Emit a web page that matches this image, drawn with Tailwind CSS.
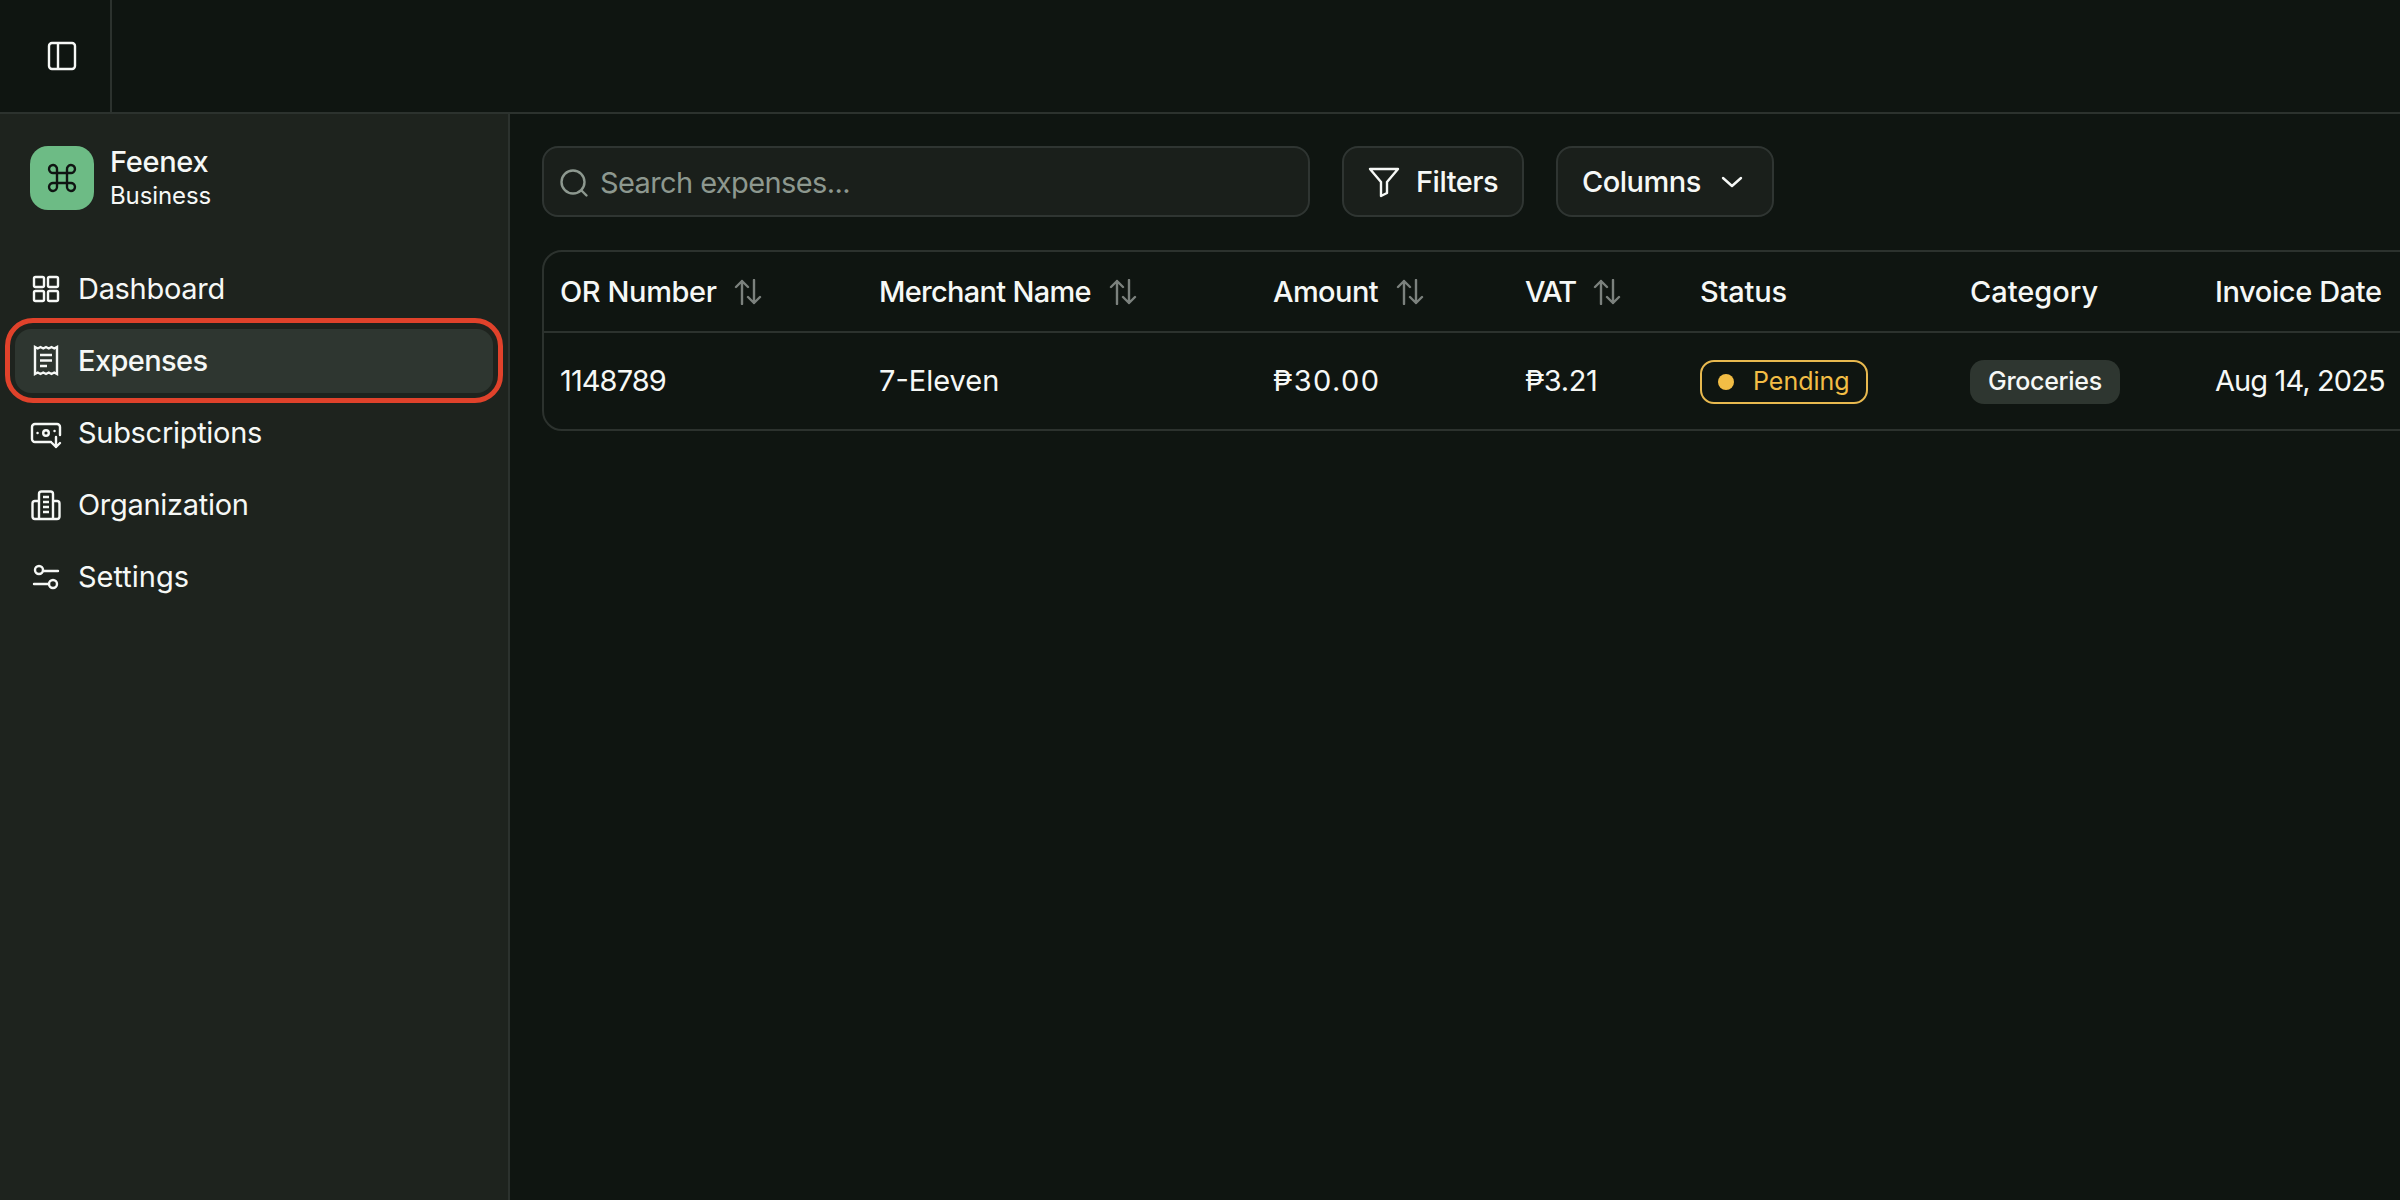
<!DOCTYPE html>
<html lang="en">

<head>
    <meta charset="UTF-8">
    <title>Feenex Expenses</title>
    <script src="https://cdn.jsdelivr.net/npm/@tailwindcss/browser@4"></script>
</head>

<body class="bg-[#0f1511] text-[#f6f8f6] font-['Inter',sans-serif]">
    <div class="w-[2400px] h-[1200px] overflow-hidden flex flex-col">

        <!-- top bar -->
        <header class="h-[114px] shrink-0 flex border-b-2 border-[#2c322e]">
            <div class="w-[112px] flex items-center pl-[46px] border-r-2 border-[#2c322e]">
                <svg class="w-8 h-8" viewBox="0 0 32 32" fill="none" stroke="currentColor" stroke-width="2.4">
                    <rect x="3" y="3" width="26" height="26" rx="3" />
                    <path d="M12 3v26" />
                </svg>
            </div>
        </header>

        <div class="flex flex-1 min-h-0">
            <!-- sidebar -->
            <aside class="w-[510px] shrink-0 bg-[#1e231e] border-r-2 border-[#2c322e] px-[15px] pt-[30px]">
                <div class="flex items-center gap-4 pl-[15px]">
                    <div class="w-16 h-16 rounded-[18px] bg-[#6dbb85] flex items-center justify-center text-[#0f1412]">
                        <svg class="w-8 h-8" viewBox="0 0 32 32" fill="none" stroke="currentColor" stroke-width="2.4">
                            <path d="M21 11H11v10h10V11zM11 11H7.500a4 4 0 1 1 3.500-3.500V11zM21 11V7.500a4 4 0 1 1 3.500 3.500H21zM11 21v3.500A4 4 0 1 1 7.500 21H11zM21 21h3.500a4 4 0 1 1-3.500 3.500V21z" />
                        </svg>
                    </div>
                    <div>
                        <div class="text-[29px] leading-[36px] font-medium tracking-[-0.3px]">Feenex</div>
                        <div class="text-[24px] leading-[30px] tracking-[-0.1px] pt-[1px]">Business</div>
                    </div>
                </div>

                <nav class="mt-[46px] flex flex-col gap-2 text-[29px] tracking-[-0.3px]">
                    <a class="h-16 flex items-center gap-4 pl-[15px]">
                        <svg class="w-8 h-8" viewBox="0 0 32 32" fill="none" stroke="currentColor" stroke-width="2.400">
                            <rect x="4" y="4" width="10" height="10" rx="1.500" />
                            <rect x="18" y="4" width="10" height="10" rx="1.500" />
                            <rect x="4" y="18" width="10" height="10" rx="1.500" />
                            <rect x="18" y="18" width="10" height="10" rx="1.500" />
                        </svg>
                        Dashboard
                    </a>
                    <a class="relative h-16 flex items-center gap-4 pl-[15px] rounded-[16px] bg-[#2e3630] font-medium tracking-[-0.6px]">
                        <svg class="w-8 h-8" viewBox="0 0 32 32" fill="none" stroke="currentColor" stroke-width="2.400">
                            <path d="M5 2v27l2.750-1.500 2.750 1.500 2.750-1.500 2.750 1.500 2.750-1.500 2.750 1.500 2.750-1.500L27 29V2l-2.750 1.500L21.500 2l-2.750 1.500L16 2l-2.750 1.500L10.500 2 7.750 3.500z" />
                            <path d="M10 10h12M10 15.500h12M10 21h7" />
                        </svg>
                        Expenses
                        <!-- red annotation round the active item -->
                        <span class="absolute -inset-x-[10px] -top-[11px] -bottom-[10px] border-[5px] border-[#e0422b] rounded-[28px]"></span>
                    </a>
                    <a class="h-16 flex items-center gap-4 pl-[15px]">
                        <svg class="w-8 h-8" viewBox="0 0 32 32" fill="none" stroke="currentColor" stroke-width="2.400" stroke-linecap="round" stroke-linejoin="round">
                            <path d="M21 25H5a3 3 0 0 1-3-3V10a3 3 0 0 1 3-3h22a3 3 0 0 1 3 3v8" />
                            <circle cx="16" cy="16" r="2.800" />
                            <path d="M7.500 16h.100M24.500 14h.100M26 20v10M22 26l4 4 4-4" />
                        </svg>
                        Subscriptions
                    </a>
                    <a class="h-16 flex items-center gap-4 pl-[15px]">
                        <svg class="w-8 h-8" viewBox="0 0 32 32" fill="none" stroke="currentColor" stroke-width="2.400" stroke-linejoin="round">
                            <path d="M9 30V5a2.500 2.500 0 0 1 2.500-2.500h9A2.500 2.500 0 0 1 23 5v25" />
                            <path d="M9 12H5a2.500 2.500 0 0 0-2.500 2.500v13A2.500 2.500 0 0 0 5 30h22a2.500 2.500 0 0 0 2.500-2.500v-13A2.500 2.500 0 0 0 27 12h-4" />
                            <path d="M13 8h6M13 13h6M13 18h6M13 23h6" />
                        </svg>
                        Organization
                    </a>
                    <a class="h-16 flex items-center gap-4 pl-[15px] tracking-[0px]">
                        <svg class="w-8 h-8" viewBox="0 0 32 32" fill="none" stroke="currentColor" stroke-width="2.400" stroke-linecap="round">
                            <circle cx="9" cy="9" r="4" />
                            <circle cx="23" cy="23" r="4" />
                            <path d="M13 10h15M4 23h15" />
                        </svg>
                        Settings
                    </a>
                </nav>
            </aside>

            <!-- main -->
            <main class="flex-1 min-w-0 pl-[32px] pt-[32px]">
                <div class="flex text-[29px] tracking-[-0.3px]">
                    <div class="w-[768px] h-[71px] flex items-center gap-[10px] pl-[14px] pt-[2px] bg-[#1a1f1b] border-2 border-[#2f3532] rounded-[16px] text-[#8d988f] tracking-[-0.6px]">
                        <svg class="w-8 h-8 shrink-0" viewBox="0 0 32 32" fill="none" stroke="currentColor" stroke-width="2.400" stroke-linecap="round">
                            <circle cx="15" cy="15" r="11.500" />
                            <path d="M23.500 23.500l5 5" />
                        </svg>
                        Search expenses...
                    </div>
                    <div class="ml-[32px] h-[71px] w-[182px] flex items-center gap-4 pl-[24px] bg-[#1a1f1b] border-2 border-[#2f3532] rounded-[16px] font-medium tracking-[-0.5px]">
                        <svg class="w-8 h-8 shrink-0" viewBox="0 0 32 32" fill="none" stroke="currentColor" stroke-width="2.400" stroke-linejoin="round">
                            <path d="M2 3h28L19 16v11l-6 3V16z" />
                        </svg>
                        Filters
                    </div>
                    <div class="ml-[32px] h-[71px] w-[218px] flex items-center gap-5 pl-[24px] bg-[#1a1f1b] border-2 border-[#2f3532] rounded-[16px] font-medium tracking-[-0.5px]">
                        Columns
                        <svg class="w-[22px] h-[12px]" viewBox="0 0 22 12" fill="none" stroke="currentColor" stroke-width="2.400" stroke-linecap="round" stroke-linejoin="round">
                            <path d="M2 2l9 8 9-8" />
                        </svg>
                    </div>
                </div>

                <!-- table runs off the right edge -->
                <div class="mt-[33px] w-[2100px] border-2 border-[#2c322e] rounded-[20px]">
                    <div class="h-[81px] grid grid-cols-[319px_394px_252px_175px_270px_245px_1fr] items-center pl-[16px] border-b-2 border-[#2c322e] text-[29px] font-medium tracking-[-0.4px]">
                        <div class="flex items-center gap-[18px]">OR Number
                            <svg class="w-[28px] h-[26px] text-[#7b817d]" viewBox="0 0 28 26" fill="none" stroke="currentColor" stroke-width="2.400" stroke-linecap="round" stroke-linejoin="round">
                                <path d="M8 25V2M2 8l6-6 6 6M20 1v23M14 18l6 6 6-6" />
                            </svg>
                        </div>
                        <div class="flex items-center gap-[18px] tracking-[-0.7px]">Merchant Name
                            <svg class="w-[28px] h-[26px] text-[#7b817d]" viewBox="0 0 28 26" fill="none" stroke="currentColor" stroke-width="2.400" stroke-linecap="round" stroke-linejoin="round">
                                <path d="M8 25V2M2 8l6-6 6 6M20 1v23M14 18l6 6 6-6" />
                            </svg>
                        </div>
                        <div class="flex items-center gap-[18px] tracking-[-0.6px]">Amount
                            <svg class="w-[28px] h-[26px] text-[#7b817d]" viewBox="0 0 28 26" fill="none" stroke="currentColor" stroke-width="2.400" stroke-linecap="round" stroke-linejoin="round">
                                <path d="M8 25V2M2 8l6-6 6 6M20 1v23M14 18l6 6 6-6" />
                            </svg>
                        </div>
                        <div class="flex items-center gap-[17px] tracking-[-1.6px]">VAT
                            <svg class="w-[28px] h-[26px] text-[#7b817d]" viewBox="0 0 28 26" fill="none" stroke="currentColor" stroke-width="2.400" stroke-linecap="round" stroke-linejoin="round">
                                <path d="M8 25V2M2 8l6-6 6 6M20 1v23M14 18l6 6 6-6" />
                            </svg>
                        </div>
                        <div class="tracking-[-0.2px]">Status</div>
                        <div class="tracking-[0px]">Category</div>
                        <div class="tracking-[-0.4px]">Invoice Date</div>
                    </div>
                    <div class="h-[96px] grid grid-cols-[319px_394px_252px_175px_270px_245px_1fr] items-center pl-[16px] text-[29px] tracking-[-0.4px]">
                        <div class="tracking-[-0.9px]">1148789</div>
                        <div class="tracking-[0px]">7-Eleven</div>
                        <div class="tracking-[1.400px]">₱30.00</div>
                        <div>₱3.21</div>
                        <div>
                            <span class="inline-flex items-center gap-[19px] h-[44px] pl-[16px] pr-[16px] border-2 border-[#e8b94f] rounded-[14px] text-[25px] text-[#f2bd45] tracking-[0px]">
                                <span class="w-4 h-4 rounded-full bg-[#f2bd45]"></span>Pending
                            </span>
                        </div>
                        <div>
                            <span class="inline-flex items-center h-[44px] px-[18px] rounded-[14px] bg-[#2e3630] text-[25px] font-medium tracking-[-0.3px]">Groceries</span>
                        </div>
                        <div class="tracking-[-0.9px]">Aug 14, 2025</div>
                    </div>
                </div>
            </main>
        </div>
    </div>
</body>

</html>
